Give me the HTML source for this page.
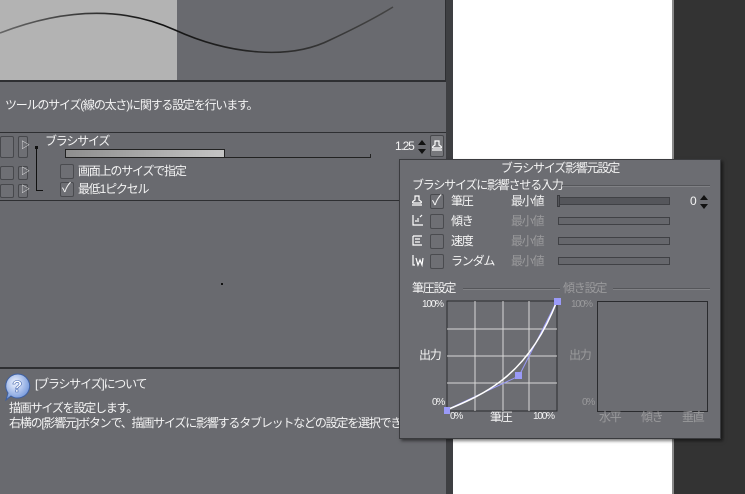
<!DOCTYPE html>
<html><head><meta charset="utf-8"><style>
*{margin:0;padding:0;box-sizing:border-box}
body{width:745px;height:494px;overflow:hidden;background:#333;position:relative;font-family:"Liberation Sans","Noto Sans CJK JP",sans-serif;font-size:12px;color:#f4f4f4;letter-spacing:-1.2px}
.a{position:absolute;white-space:nowrap;line-height:1}
.g{color:#9a9a9c}
.cb{position:absolute;width:14px;height:15px;border:1px solid #4a4b4f;background:#6e6f74;border-radius:2px}
.btn{position:absolute;border:1px solid #47484c;background:#6e6f74;border-radius:2px}
.sl{position:absolute;height:8px;border:1px solid #404145;background:#5a5b60}
.ic{position:absolute}
</style></head><body>
<div class="a" style="left:0;top:0;width:447px;height:494px;background:#696a6f"></div>
<div class="a" style="left:446px;top:0;width:7px;height:494px;background:#3e3f42"></div>
<div class="a" style="left:453px;top:0;width:219px;height:494px;background:#fff"></div>
<div class="a" style="left:672px;top:0;width:2px;height:494px;background:#8a8a8a"></div>
<!-- preview -->
<div class="a" style="left:0;top:0;width:177px;height:81px;background:#b3b3b3"></div>
<div class="a" style="left:0;top:80px;width:446px;height:2px;background:#2e2f32"></div>
<div class="a" style="left:445px;top:0;width:1px;height:82px;background:#2e2f32"></div>
<svg class="a" style="left:0;top:0" width="446" height="81"><defs><linearGradient id="lg" x1="0" x2="1"><stop offset="0" stop-color="#666"/><stop offset=".4" stop-color="#111"/><stop offset="1" stop-color="#444"/></linearGradient></defs><path d="M0 33 C60 10,120 5,175 30 C230 55,290 60,330 40 C360 26,380 15,393 7" fill="none" stroke="url(#lg)" stroke-width="1.6"/></svg>
<div class="a" style="left:5px;top:99px">ツールのサイズ(線の太さ)に関する設定を行います。</div>
<div class="a" style="left:0;top:132px;width:446px;height:1px;background:#2e2f32"></div>
<!-- rows -->
<div class="btn" style="left:0;top:136px;width:14px;height:22px"></div>
<div class="btn" style="left:18px;top:136px;width:10px;height:22px"></div>
<div class="btn" style="left:0;top:166px;width:14px;height:14px"></div>
<div class="btn" style="left:18px;top:166px;width:10px;height:14px"></div>
<div class="btn" style="left:0;top:184px;width:14px;height:14px"></div>
<div class="btn" style="left:18px;top:184px;width:10px;height:14px"></div>
<div class="a" style="left:21px;top:141px;font-size:9px">▷</div>
<div class="a" style="left:21px;top:167px;font-size:9px">▷</div>
<div class="a" style="left:21px;top:185px;font-size:9px">▷</div>
<div class="a" style="left:35px;top:146px;width:3px;height:3px;background:#111"></div>
<div class="a" style="left:36px;top:148px;width:1px;height:43px;background:#111"></div>
<div class="a" style="left:36px;top:190px;width:7px;height:1px;background:#111"></div>
<div class="a" style="left:45px;top:135px">ブラシサイズ</div>
<div class="a" style="left:65px;top:149px;width:160px;height:9px;border:1px solid #222;background:linear-gradient(90deg,#8e8e8e,#c4c4c4)"></div>
<div class="a" style="left:225px;top:157px;width:146px;height:1px;background:#222"></div>
<div class="a" style="left:370px;top:154px;width:1px;height:4px;background:#222"></div>
<div class="a" style="left:395px;top:140px">1.25</div>
<svg class="ic" style="left:417px;top:139px" width="10" height="16"><path d="M1 6 L5 1 L9 6Z M1 10 L5 15 L9 10Z" fill="#111"/></svg>
<div class="btn" style="left:430px;top:135px;width:14px;height:22px;background:#77787c"></div>
<svg class="ic" style="left:431px;top:140px" width="12" height="12"><path d="M4 1 H8 V5 C10 6,11 7,10 8 H2 C1 7,2 6,4 5Z M1 10 H11" fill="none" stroke="#fff" stroke-width="1.2"/></svg>
<div class="cb" style="left:60px;top:164px"></div>
<div class="a" style="left:78px;top:165px">画面上のサイズで指定</div>
<div class="cb" style="left:60px;top:182px"></div>
<div class="a" style="left:62px;top:181px;font-size:13px">✓</div>
<div class="a" style="left:78px;top:183px">最低1ピクセル</div>
<div class="a" style="left:0;top:200px;width:446px;height:1px;background:#2e2f32"></div>
<div class="a" style="left:221px;top:283px;width:2px;height:2px;background:#111"></div>
<div class="a" style="left:0;top:367px;width:446px;height:2px;background:#2e2f32"></div>
<!-- help -->
<svg class="ic" style="left:3px;top:372px" width="30" height="30"><defs><radialGradient id="hg" cx=".4" cy=".35" r=".7"><stop offset="0" stop-color="#f0f4ff"/><stop offset="1" stop-color="#6a90d8"/></radialGradient></defs><path d="M15 2 A12 12 0 1 1 8 24 L3 28 L5 21 A12 12 0 0 1 15 2Z" fill="url(#hg)" stroke="#3e5fa0"/><text x="9" y="20" font-size="17" font-weight="bold" fill="#fff" stroke="#4a6ab0" stroke-width=".6" font-family="Liberation Sans">?</text></svg>
<div class="a" style="left:35px;top:378px">[ブラシサイズ]について</div>
<div class="a" style="left:9px;top:402px">描画サイズを設定します。</div>
<div class="a" style="left:9px;top:417px">右横の[影響元]ボタンで、描画サイズに影響するタブレットなどの設定を選択できます。</div>
<!-- popup -->
<div class="a" style="left:399px;top:159px;width:322px;height:280px;background:#6c6d72;border:1px solid #3a3b3e;box-shadow:2px 2px 3px rgba(0,0,0,.5);overflow:hidden">
<div class="a" style="left:0;top:2px;width:320px;text-align:center">ブラシサイズ影響元設定</div>
<div class="a" style="left:12px;top:19px">ブラシサイズに影響させる入力</div>
<div class="a" style="left:162px;top:25px;width:148px;height:2px;background:#55565a;border-bottom:1px solid #808185"></div>
<svg class="ic" style="left:11px;top:35px" width="14" height="80" fill="none" stroke="#fff" stroke-width="1.2">
<path d="M4 1 H8 V5 C10 6,11 7,10 8 H2 C1 7,2 6,4 5Z M1 10 H11"/>
<path d="M2 20 V30 H12 M5 27 V25 M7 27 V23 M9 22 L11 20"/>
<path d="M2 41 H11 M2 41 V50 H11 M4 44 H9 M4 47 H9"/>
<path d="M2 60 V70 H4 M5 63 L7 70 L9 65 L11 70 L12 63"/>
</svg>
<div class="cb" style="left:30px;top:34px"></div><div class="a" style="left:32px;top:33px;font-size:14px">✓</div>
<div class="cb" style="left:30px;top:54px"></div>
<div class="cb" style="left:30px;top:74px"></div>
<div class="cb" style="left:30px;top:94px"></div>
<div class="a" style="left:51px;top:35px">筆圧</div>
<div class="a" style="left:51px;top:55px">傾き</div>
<div class="a" style="left:51px;top:75px">速度</div>
<div class="a" style="left:51px;top:95px">ランダム</div>
<div class="a" style="left:111px;top:35px">最小値</div>
<div class="a g" style="left:111px;top:55px">最小値</div>
<div class="a g" style="left:111px;top:75px">最小値</div>
<div class="a g" style="left:111px;top:95px">最小値</div>
<div class="sl" style="left:158px;top:37px;width:112px;background:#55565b"></div>
<div class="a" style="left:157px;top:35px;width:3px;height:12px;background:#55565b;border:1px solid #3a3b3f"></div>
<div class="sl" style="left:158px;top:57px;width:112px;background:#66676c"></div>
<div class="sl" style="left:158px;top:77px;width:112px;background:#66676c"></div>
<div class="sl" style="left:158px;top:97px;width:112px;background:#66676c"></div>
<div class="a" style="left:290px;top:35px">0</div>
<svg class="ic" style="left:299px;top:34px" width="10" height="16"><path d="M1 6 L5 1 L9 6Z M1 10 L5 15 L9 10Z" fill="#111"/></svg>
<div class="a" style="left:12px;top:122px">筆圧設定</div>
<div class="a" style="left:63px;top:128px;width:97px;height:2px;background:#55565a;border-bottom:1px solid #808185"></div>
<div class="a g" style="left:163px;top:122px">傾き設定</div>
<div class="a" style="left:213px;top:128px;width:97px;height:2px;background:#55565a;border-bottom:1px solid #808185"></div>
<div class="a" style="left:22px;top:140px;font-size:10px">100%</div>
<div class="a" style="left:19px;top:189px">出力</div>
<div class="a" style="left:32px;top:238px;font-size:10px">0%</div>
<div class="a" style="left:50px;top:252px;font-size:10px">0%</div>
<div class="a" style="left:90px;top:251px">筆圧</div>
<div class="a" style="left:133px;top:252px;font-size:10px">100%</div>
<svg class="a" style="left:44px;top:138px" width="120" height="116">
<rect x="3" y="3" width="110" height="110" fill="none" stroke="#2a2b2e"/>
<g stroke="#d8d8d8" stroke-width="1"><line x1="31" y1="3" x2="31" y2="113"/><line x1="59" y1="3" x2="59" y2="113"/><line x1="85" y1="3" x2="85" y2="113"/><line x1="3" y1="31" x2="113" y2="31"/><line x1="3" y1="58" x2="113" y2="58"/><line x1="3" y1="85" x2="113" y2="85"/></g>
<path d="M0 113 L75 78 L113 3" fill="none" stroke="#9a9af8"/>
<path d="M0 113 C45 95,85 75,113 3" fill="none" stroke="#fff" stroke-width="1.5"/>
<rect x="-1" y="109" width="7" height="7" fill="#9a9af8"/>
<rect x="71" y="74" width="7" height="7" fill="#9a9af8"/>
<rect x="110" y="0" width="7" height="7" fill="#9a9af8"/>
</svg>
<div class="a" style="left:197px;top:141px;width:111px;height:111px;border:1px solid #2a2b2e"></div>
<div class="a g" style="left:171px;top:140px;font-size:10px">100%</div>
<div class="a g" style="left:169px;top:189px">出力</div>
<div class="a g" style="left:182px;top:238px;font-size:10px">0%</div>
<div class="a g" style="left:199px;top:251px">水平</div>
<div class="a g" style="left:241px;top:251px">傾き</div>
<div class="a g" style="left:282px;top:251px">垂直</div>
</div>
</body></html>
